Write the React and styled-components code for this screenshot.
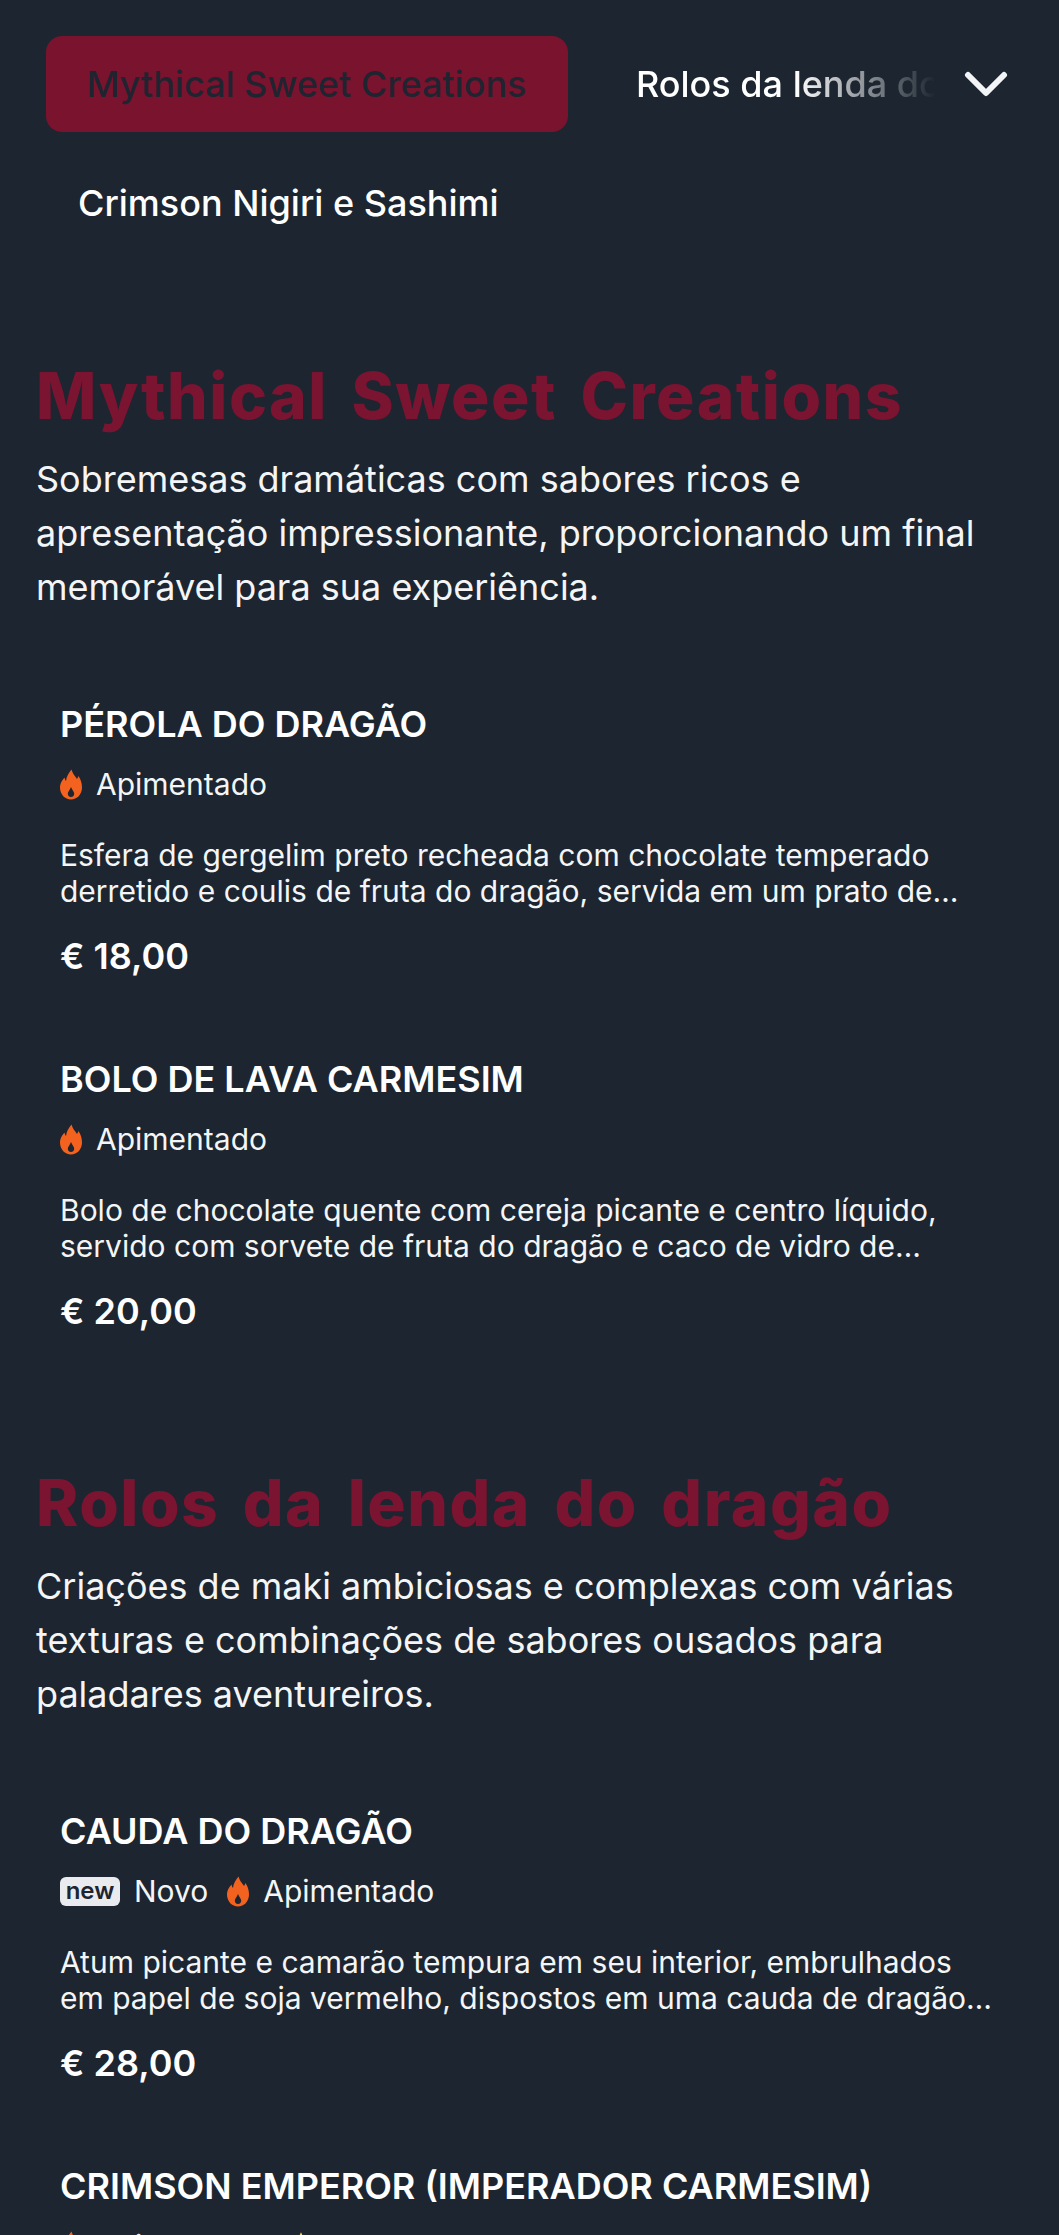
import React from 'react';
import styled, { createGlobalStyle } from 'styled-components';

const GlobalStyle = createGlobalStyle`
  html, body {
    margin: 0;
    height: 100%;
    overflow: hidden;
    background: #1c2530;
  }
  body {
    font-family: 'Inter', 'Liberation Sans', sans-serif;
    color: #fff;
  }
`;

const Page = styled.div`
  width: 1059px;
  height: 2235px;
  overflow: hidden;
  background: #1c2530;
`;

const Nav = styled.nav`
  padding: 36px 36px 0 46px;
`;

const TabRow = styled.div`
  display: flex;
  align-items: center;
`;

const TabStrip = styled.div`
  flex: 1;
  display: flex;
  gap: 27px;
  min-width: 0;
  overflow: hidden;
  mask-image: linear-gradient(to right, #000 750px, transparent 890px);
`;

const Tab = styled.div`
  flex: none;
  height: 96px;
  padding: 0 41px;
  display: flex;
  align-items: center;
  box-sizing: border-box;
  border-radius: 16px;
  font-size: 36px;
  font-weight: 500;
  white-space: nowrap;
  background: ${(p) => (p.$active ? '#7a132e' : 'transparent')};
  color: ${(p) => (p.$active ? '#1e2430' : '#fff')};
`;

const SecondTabs = styled.div`
  display: flex;
  margin: 23px 0 0 -9px;
`;

const Chevron = styled.svg`
  flex: none;
  width: 44px;
  height: 26px;
  margin: 0 15px 0 30px;
  fill: none;
  stroke: #f2f4f6;
  stroke-width: 6;
  stroke-linecap: round;
  stroke-linejoin: round;
`;

const Section = styled.section`
  padding: 109px 36px 0;

  & + & {
    padding-top: 134px;
  }
`;

const SectionTitle = styled.h2`
  margin: 0;
  font-size: 64px;
  line-height: 72px;
  font-weight: 800;
  letter-spacing: 1.5px;
  word-spacing: 8px;
  color: #7a1430;
  white-space: nowrap;
`;

const SectionText = styled.p`
  margin: 20px 0 0;
  font-size: 36px;
  line-height: 54px;
  color: #f4f5f6;
`;

const Items = styled.div`
  display: flex;
  flex-direction: column;
  gap: 79px;
  margin-top: 88px;
  padding: 0 24px;
`;

const ItemName = styled.h3`
  margin: 0;
  font-size: 36px;
  line-height: 44px;
  font-weight: 600;
  white-space: nowrap;
`;

const Tags = styled.div`
  display: flex;
  align-items: center;
  gap: 19px;
  margin-top: 18px;
  height: 40px;
`;

const Tag = styled.span`
  display: flex;
  align-items: center;
  gap: 14px;
  font-size: 30px;
  line-height: 40px;
  color: #f4f5f6;
`;

const NewBadge = styled.span`
  width: 60px;
  height: 29px;
  display: flex;
  align-items: center;
  justify-content: center;
  border-radius: 6px;
  background: #e9ebee;
  color: #1e2430;
  font-size: 24px;
  font-weight: 600;
`;

const FlameIcon = styled.svg`
  width: 22px;
  height: 31px;
  fill: #f4621f;
`;

const StarIcon = styled.svg`
  width: 30px;
  height: 30px;
  fill: #f5d75a;
`;

const ItemText = styled.p`
  margin: 33px 0 0;
  font-size: 30px;
  line-height: 36px;
  color: #f4f5f6;
  display: -webkit-box;
  -webkit-box-orient: vertical;
  -webkit-line-clamp: 2;
  overflow: hidden;
`;

const Price = styled.div`
  margin-top: 25px;
  font-size: 36px;
  line-height: 44px;
  font-weight: 600;
`;

const Flame = () => (
  <FlameIcon viewBox="0 0 22 30">
    <path
      fillRule="evenodd"
      d="M11.5 0C12.5 4 15 6.5 17 9.5C17.6 8.8 18 7.6 18.3 6.5C20.5 9.5 22 13 22 18C22 25 17 30 11 30C5 30 0 25 0 18C0 13.5 2.5 10.5 4.5 8C4.8 9.5 5.2 10.5 6 11.5C6.5 7 8.5 3.5 11.5 0ZM11 27.5C9 27.5 7.8 26 7.8 24.2C7.8 22 10 20.6 11 17.5C12.1 20.6 14.2 22 14.2 24.2C14.2 26 13 27.5 11 27.5Z"
    />
  </FlameIcon>
);

const Star = () => (
  <StarIcon viewBox="0 0 24 24">
    <path d="M12 1l3.4 7.2 7.6 1-5.6 5.3 1.5 7.8L12 17.5l-6.9 3.8 1.5-7.8L1 9.2l7.6-1z" />
  </StarIcon>
);

const sections = [
  {
    title: 'Mythical Sweet Creations',
    text: 'Sobremesas dramáticas com sabores ricos e apresentação impressionante, proporcionando um final memorável para sua experiência.',
    items: [
      {
        name: 'PÉROLA DO DRAGÃO',
        tags: ['spicy'],
        text: 'Esfera de gergelim preto recheada com chocolate temperado derretido e coulis de fruta do dragão, servida em um prato de ardósia preta com folha de ouro comestível.',
        price: '€ 18,00',
      },
      {
        name: 'BOLO DE LAVA CARMESIM',
        tags: ['spicy'],
        text: 'Bolo de chocolate quente com cereja picante e centro líquido, servido com sorvete de fruta do dragão e caco de vidro de açúcar vermelho por cima.',
        price: '€ 20,00',
      },
    ],
  },
  {
    title: 'Rolos da lenda do dragão',
    text: 'Criações de maki ambiciosas e complexas com várias texturas e combinações de sabores ousados para paladares aventureiros.',
    items: [
      {
        name: 'CAUDA DO DRAGÃO',
        tags: ['new', 'spicy'],
        text: 'Atum picante e camarão tempura em seu interior, embrulhados em papel de soja vermelho, dispostos em uma cauda de dragão com abacate e molho de pimenta.',
        price: '€ 28,00',
      },
      {
        name: 'CRIMSON EMPEROR (IMPERADOR CARMESIM)',
        tags: ['spicy', 'star'],
        text: 'Lagosta e wagyu enrolados em arroz vermelho.',
        price: '€ 38,00',
      },
    ],
  },
];

const ItemTag = ({ kind }) => {
  if (kind === 'new') {
    return (
      <Tag>
        <NewBadge>new</NewBadge>
        Novo
      </Tag>
    );
  }
  if (kind === 'star') {
    return (
      <Tag>
        <Star />
        Recomendado
      </Tag>
    );
  }
  return (
    <Tag>
      <Flame />
      Apimentado
    </Tag>
  );
};

const App = () => (
  <Page>
    <GlobalStyle />
    <Nav>
      <TabRow>
        <TabStrip>
          <Tab $active>Mythical Sweet Creations</Tab>
          <Tab>Rolos da lenda do dragão</Tab>
        </TabStrip>
        <Chevron viewBox="0 0 44 26">
          <path d="M4 4l18 18L40 4" />
        </Chevron>
      </TabRow>
      <SecondTabs>
        <Tab>Crimson Nigiri e Sashimi</Tab>
      </SecondTabs>
    </Nav>
    {sections.map((section) => (
      <Section key={section.title}>
        <SectionTitle>{section.title}</SectionTitle>
        <SectionText>{section.text}</SectionText>
        <Items>
          {section.items.map((item) => (
            <article key={item.name}>
              <ItemName>{item.name}</ItemName>
              <Tags>
                {item.tags.map((kind) => (
                  <ItemTag key={kind} kind={kind} />
                ))}
              </Tags>
              <ItemText>{item.text}</ItemText>
              <Price>{item.price}</Price>
            </article>
          ))}
        </Items>
      </Section>
    ))}
  </Page>
);

export default App;
